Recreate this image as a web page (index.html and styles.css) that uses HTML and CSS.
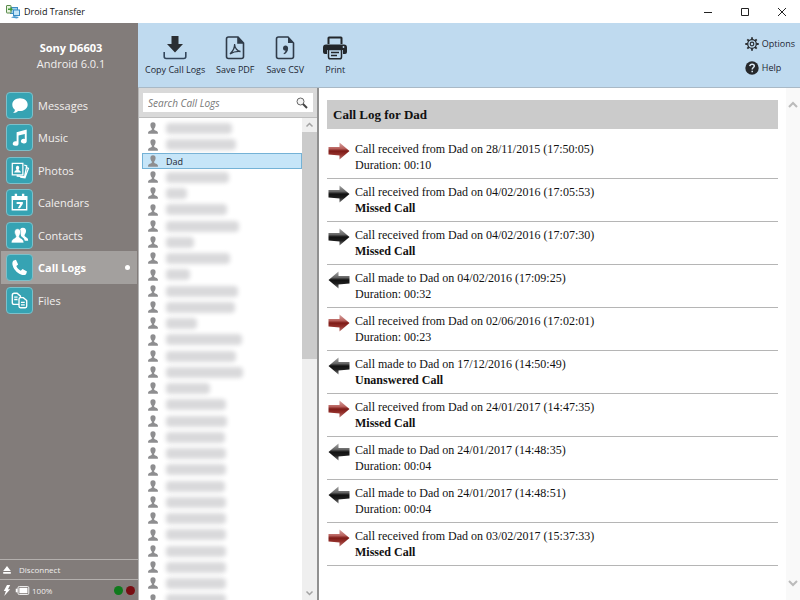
FILE: index.html
```html
<!DOCTYPE html>
<html lang="en">
<head>
    <meta charset="UTF-8">
    <meta name="viewport" content="width=device-width, initial-scale=1.0">
    <title>Droid Transfer</title>
    <link rel="stylesheet" href="styles.css">
</head>
<body>
    <!-- Shared icons -->
    <svg class="sprite" aria-hidden="true">
        <defs>
            <linearGradient id="red-fill" x1="0" y1="0" x2="0" y2="1">
                <stop offset="0" stop-color="#d9a5a3"/>
                <stop offset="0.35" stop-color="#b8615d"/>
                <stop offset="0.5" stop-color="#7d1a16"/>
                <stop offset="0.7" stop-color="#93302b"/>
                <stop offset="1" stop-color="#b9706c"/>
            </linearGradient>
            <linearGradient id="black-fill" x1="0" y1="0" x2="0" y2="1">
                <stop offset="0" stop-color="#a5a5a5"/>
                <stop offset="0.35" stop-color="#666"/>
                <stop offset="0.5" stop-color="#111"/>
                <stop offset="0.7" stop-color="#1c1c1c"/>
                <stop offset="1" stop-color="#777"/>
            </linearGradient>
        </defs>
        <symbol id="arrow-red" viewBox="0 0 22 18">
            <path d="M.5 5H11.500V.5L21.500 9 11.500 17.500V13.500L.5 12.500z" fill="url(#red-fill)"/>
        </symbol>
        <symbol id="arrow-black" viewBox="0 0 22 18">
            <path d="M.5 5H11.500V.5L21.500 9 11.500 17.500V13.500L.5 12.500z" fill="url(#black-fill)"/>
        </symbol>
        <symbol id="arrow-left" viewBox="0 0 22 18">
            <path d="M21.500 5H10.500V.5L.5 9 10.500 17.500V13.500L21.500 12.500z" fill="url(#black-fill)"/>
        </symbol>
        <symbol id="person" viewBox="0 0 10 12">
            <path d="M5 .3C3.200.3 2.300 1.500 2.400 3.200c.1 1.600.8 2.600 1.400 3.200v1.300C3.600 8.700.3 8.600.1 10.500V11.700H9.900V10.500C9.700 8.600 6.400 8.700 6.200 7.700V6.400c.6-.6 1.300-1.600 1.400-3.200C7.700 1.500 6.800.3 5 .3z" fill="#8e8e90"/>
        </symbol>
        <symbol id="chevron-up" viewBox="0 0 12 8">
            <path d="M2 6l4-4 4 4" fill="none" stroke="currentColor" stroke-width="2"/>
        </symbol>
        <symbol id="chevron-down" viewBox="0 0 12 8">
            <path d="M2 2l4 4 4-4" fill="none" stroke="currentColor" stroke-width="2"/>
        </symbol>
    </svg>

    <header class="title-bar">
        <svg class="app-icon" viewBox="0 0 14 14" aria-hidden="true">
            <rect x="4.500" y="2.500" width="7" height="6" fill="#9fd0ee" stroke="#3a8cc4"/>
            <rect x="7.500" y="5" width="6" height="5.500" fill="#c5e6f8" stroke="#3a8cc4"/>
            <path d="M5 12.500l3-1.500 5 1-2 1.500z" fill="#4c9bd0"/>
            <rect x=".5" y=".5" width="4.500" height="7.500" rx=".5" fill="#e7f3dd" stroke="#5a8a4c"/>
            <path d="M2 3.500h2.500V2.200l2.500 2-2.500 2V5H2z" fill="#3f9a35"/>
        </svg>
        <h1>Droid Transfer</h1>
        <div class="window-buttons">
            <button aria-label="Minimize"><svg viewBox="0 0 10 10"><path d="M1 5.500h8" stroke="#222" fill="none"/></svg></button>
            <button aria-label="Maximize"><svg viewBox="0 0 10 10"><path d="M1.500 1.500h7v7h-7z" stroke="#222" fill="none"/></svg></button>
            <button aria-label="Close"><svg viewBox="0 0 10 10"><path d="M1 1l8 8M9 1L1 9" stroke="#222" fill="none"/></svg></button>
        </div>
    </header>

    <div class="app">
        <aside class="sidebar">
            <div class="device">
                <h2>Sony D6603</h2>
                <p>Android 6.0.1</p>
            </div>

            <nav class="menu">
                <a href="#messages">
                    <svg class="tile" viewBox="0 0 26 26"><path d="M13.500 5.500c-4.600 0-8 2.900-8 6.600 0 2.200 1 4 2.700 5.200 0 1.300-.7 2.500-1.900 3.400 2.200.1 4-.6 5.200-2 5.500.7 10-2.500 10-6.600 0-3.700-3.400-6.600-8-6.600z"/></svg>
                    Messages
                </a>
                <a href="#music">
                    <svg class="tile" viewBox="0 0 26 26"><path d="M10 7.500l10.500-2.700v11.900a3 2.400 0 1 1-2-2.200V9.300L12 11v8.200a3 2.400 0 1 1-2-2.200z"/></svg>
                    Music
                </a>
                <a href="#photos">
                    <svg class="tile" viewBox="0 0 26 26"><path d="M5.500 5.500h11v12h-11zM18 7.500l2.500.8-2.200 11-8.300-.4M20.500 10l1.800.8-3.600 9.700-5-.6" fill="none" stroke="#fff" stroke-width="1.300"/><path d="M7.500 15c.2-2 1.700-2 2.600-2.600C8.800 11 9 8 11 8s2.200 3 .9 4.400c.9.6 2.400.6 2.600 2.600z"/></svg>
                    Photos
                </a>
                <a href="#calendars">
                    <svg class="tile" viewBox="0 0 26 26"><path d="M5.500 7h15v13.500h-15z" fill="none" stroke="#fff" stroke-width="1.400"/><path d="M5 6.500h16v4H5zM8 4h2.500v3H8zM15.500 4H18v3h-2.500zM10 12.500h6.500v1.700L13.500 19h-2.300l2.500-4.500H10z"/></svg>
                    Calendars
                </a>
                <a href="#contacts">
                    <svg class="tile" viewBox="0 0 26 26"><path d="M16.500 5c-2.600 0-3.300 2.200-3 4.300.2 1.500 1 2.400 1 3.700 0 1.500 3.500 2 4 5.500h3.500c.3-4-3.800-3.600-3.800-5.500 0-1 1.200-2 1.500-3.700C20.200 7 19.100 5 16.500 5z"/><path d="M11 6c-2.600 0-3.400 2.200-3.100 4.300.2 1.500 1.400 2.600 1.400 3.700 0 2-5 1.900-4.800 6.700h13c.2-4.800-4.800-4.700-4.800-6.700 0-1.100 1.200-2.200 1.400-3.700C14.400 8.200 13.600 6 11 6z" stroke="#36a3b3" stroke-width=".6"/></svg>
                    Contacts
                </a>
                <a href="#call-logs" class="active">
                    <svg class="tile" viewBox="0 0 26 26"><path d="M6.500 6l2.800-1 2.300 4.800-1.900 1.700c.8 2.200 2.400 3.900 4.600 4.800l1.900-1.700 4.600 2.600-1 2.700c-1 1-3.100 1.300-5.300.4C10 18.500 6.300 14 5.600 9.600c-.1-1.500.2-2.800.9-3.600z"/></svg>
                    Call Logs
                    <span class="dot"></span>
                </a>
                <a href="#files">
                    <svg class="tile" viewBox="0 0 26 26"><g stroke="#fff" stroke-width="1.400" fill="none"><path d="M5.500 7.500q0-2 2-2h3l3.500 3v6.500q0 2-2 2H7.500q-2 0-2-2zM7.500 9.500H11M7.500 12H11"/><path d="M12.500 11.500q0-1.500 1.500-1.500h3l3.500 3v6q0 1.500-1.500 1.500H14q-1.500 0-1.500-1.500z" fill="#36a3b3"/><path d="M14.500 15h4M14.500 17.500h4"/></g></svg>
                    Files
                </a>
            </nav>

            <div class="sidebar-footer">
                <button class="disconnect">
                    <svg viewBox="0 0 8 8"><path d="M4 0l3.800 5H.2zM.2 6h7.600v1.800H.2z"/></svg>
                    Disconnect
                </button>
                <div class="status">
                    <svg class="bolt" viewBox="0 0 8 12"><path d="M4 0L.5 6.500h2.300L1 12l6.500-7.500H5L7.500 0z"/></svg>
                    <svg class="battery" viewBox="0 0 15 10"><rect x="2.500" y=".5" width="12" height="9" rx="1.500" fill="none" stroke="#fff"/><rect x="4" y="2" width="9" height="6"/><rect x="0" y="3" width="2" height="4"/></svg>
                    <span>100%</span>
                    <span class="light green"></span>
                    <span class="light red"></span>
                </div>
            </div>
        </aside>

        <div class="content">
            <div class="toolbar">
                <button class="tool">
                    <svg viewBox="0 0 24 24"><path d="M8.500 0h7v8H20l-8 8.500L4 8h4.500z" fill="#2a2e33"/><path d="M1.200 16v4.500q0 2 2 2h17.600q2 0 2-2V16" fill="none" stroke="#33465c" stroke-width="1.600"/></svg>
                    Copy Call Logs
                </button>
                <button class="tool">
                    <svg viewBox="0 0 24 24"><path d="M5.500 1h9.500l5.500 6v13.500q0 2-2 2h-13q-2 0-2-2V3q0-2 2-2zM15 1v6h5.500" fill="none" stroke="#2f3b49" stroke-width="1.600"/><path d="M15 1v6h5.500z" fill="#2f3b49"/><path d="M7 18c2-2 5-6.500 4.500-10 .3 4 3 7.500 6 7.500-3-.3-7 .3-10.500 2.500z" fill="none" stroke="#2f3b49" stroke-width="1.300"/></svg>
                    Save PDF
                </button>
                <button class="tool">
                    <svg viewBox="0 0 24 24"><path d="M5.500 1h9.500l5.500 6v13.500q0 2-2 2h-13q-2 0-2-2V3q0-2 2-2z" fill="none" stroke="#2f3b49" stroke-width="1.600"/><path d="M15 1v6h5.500zM12.500 9.500c1.600 0 2.600 1.100 2.600 2.900 0 2.800-1.600 4.900-4.100 5.900l-.5-.9c1.300-.7 2-1.700 2-2.800-1.500.1-2.500-.9-2.500-2.300 0-1.600 1-2.800 2.500-2.800z" fill="#2f3b49"/></svg>
                    Save CSV
                </button>
                <button class="tool">
                    <svg viewBox="0 0 24 24"><path d="M4.500 8V2q0-1.500 1.500-1.500h12q1.500 0 1.500 1.500v6h-2V2.500h-11V8z" fill="#23272b"/><path d="M3 8.500h18q3 0 3 3V16q0 2-2 2h-2v-4H4v4H2q-2 0-2-2v-4.500q0-3 3-3z" fill="#23272b"/><path d="M5.500 13.500h13v7.500q0 1.800-1.800 1.800H7.300q-1.800 0-1.800-1.800z" fill="none" stroke="#23272b" stroke-width="1.500"/><path d="M8 16.500h8M8 19.500h6" stroke="#23272b" stroke-width="1.300"/><circle cx="20.500" cy="11" r=".9" fill="#bfdaef"/></svg>
                    Print
                </button>
                <div class="tool-links">
                    <button>
                        <svg viewBox="0 0 14 14"><g fill="none" stroke="#2c3034"><circle cx="7" cy="7" r="4.300" stroke-width="1.300"/><circle cx="7" cy="7" r="1.800" stroke-width="1.200"/><path d="M7 .3v2.400M7 11.300v2.400M.3 7h2.400M11.300 7h2.400M2.300 2.300L4 4M10 10l1.700 1.700M11.700 2.300L10 4M4 10l-1.700 1.700" stroke-width="1.800"/></g></svg>
                        Options
                    </button>
                    <button>
                        <svg viewBox="0 0 14 14"><circle cx="7" cy="7" r="6.700" fill="#26282b"/><path d="M4.800 5.200C5 3.700 6 3.200 7.100 3.200c1.300 0 2.200.7 2.200 1.800 0 1.500-2.100 1.600-2.100 3.500M7.200 9.700v1.600" fill="none" stroke="#dce9f4" stroke-width="1.500"/></svg>
                        Help
                    </button>
                </div>
            </div>

            <div class="panes">
                <section class="contacts">
                    <div class="search">
                        <input type="text" id="search" placeholder="Search Call Logs" aria-label="Search Call Logs">
                        <svg viewBox="0 0 12 12" aria-hidden="true"><circle cx="4.500" cy="4.500" r="3.500" fill="#f4f4f4" stroke="#666"/><path d="M7 7l4 4" stroke="#444" stroke-width="2"/></svg>
                    </div>
                    <div class="list-wrap">
                        <ul class="contact-list" id="contact-list"></ul>
                        <div class="scrollbar">
                            <svg><use href="#chevron-up"/></svg>
                            <div class="track"><div class="thumb"></div></div>
                            <svg><use href="#chevron-down"/></svg>
                        </div>
                    </div>
                </section>

                <main class="log">
                    <div class="log-body">
                        <h2>Call Log for Dad</h2>
                        <ul>
                            <li><svg><use href="#arrow-red"/></svg><p>Call received from Dad on 28/11/2015 (17:50:05)<br>Duration: 00:10</p></li>
                            <li><svg><use href="#arrow-black"/></svg><p>Call received from Dad on 04/02/2016 (17:05:53)<br><b>Missed Call</b></p></li>
                            <li><svg><use href="#arrow-black"/></svg><p>Call received from Dad on 04/02/2016 (17:07:30)<br><b>Missed Call</b></p></li>
                            <li><svg><use href="#arrow-left"/></svg><p>Call made to Dad on 04/02/2016 (17:09:25)<br>Duration: 00:32</p></li>
                            <li><svg><use href="#arrow-red"/></svg><p>Call received from Dad on 02/06/2016 (17:02:01)<br>Duration: 00:23</p></li>
                            <li><svg><use href="#arrow-left"/></svg><p>Call made to Dad on 17/12/2016 (14:50:49)<br><b>Unanswered Call</b></p></li>
                            <li><svg><use href="#arrow-red"/></svg><p>Call received from Dad on 24/01/2017 (14:47:35)<br><b>Missed Call</b></p></li>
                            <li><svg><use href="#arrow-left"/></svg><p>Call made to Dad on 24/01/2017 (14:48:35)<br>Duration: 00:04</p></li>
                            <li><svg><use href="#arrow-left"/></svg><p>Call made to Dad on 24/01/2017 (14:48:51)<br>Duration: 00:04</p></li>
                            <li><svg><use href="#arrow-red"/></svg><p>Call received from Dad on 03/02/2017 (15:37:33)<br><b>Missed Call</b></p></li>
                        </ul>
                    </div>
                    <div class="scrollbar light-bar">
                        <svg><use href="#chevron-up"/></svg>
                        <svg><use href="#chevron-down"/></svg>
                    </div>
                </main>
            </div>
        </div>
    </div>

    <script src="script.js"></script>
</body>
</html>
```

FILE: styles.css
```css
* {
    box-sizing: border-box;
}

body {
    display: flex;
    flex-direction: column;
    height: 100vh;
    margin: 0;
    overflow: hidden;
    font-family: "Open Sans", "Noto Sans", sans-serif;
    font-size: 10px;
    color: #1d2733;
    background: #fff;
}

h1, h2, p, ul {
    margin: 0;
    padding: 0;
}

ul {
    list-style: none;
}

svg {
    display: block;
    flex: none;
}

button {
    padding: 0;
    border: none;
    background: none;
    font: inherit;
    color: inherit;
    cursor: pointer;
}

.sprite {
    position: absolute;
    width: 0;
    height: 0;
}

/* Title bar */
.title-bar {
    display: flex;
    flex: none;
    align-items: center;
    height: 23px;
    padding-left: 6px;
}

.title-bar h1 {
    margin-left: 4px;
    font-size: 9px;
    font-weight: normal;
    color: #111;
}

.app-icon {
    width: 14px;
    height: 14px;
}

.window-buttons {
    display: flex;
    margin-left: auto;
}

.window-buttons button {
    display: flex;
    align-items: center;
    justify-content: center;
    width: 37px;
    height: 22px;
}

.window-buttons svg {
    width: 10px;
    height: 10px;
}

.app {
    display: flex;
    flex: 1;
    min-height: 0;
}

/* Sidebar */
.sidebar {
    display: flex;
    flex-direction: column;
    flex: none;
    width: 138px;
    color: #f1efee;
    background: #827c7a;
}

.sidebar svg {
    fill: #fff;
}

.device {
    padding: 17px 0 17px 4px;
    font-size: 11px;
    line-height: 16px;
    text-align: center;
}

.device h2 {
    font-size: 11px;
    color: #fff;
}

.menu {
    padding: 0 1px;
}

.menu a {
    display: flex;
    align-items: center;
    height: 32px;
    padding-left: 5px;
    font-size: 11px;
    color: inherit;
    text-decoration: none;
}

.menu a:nth-child(even) {
    height: 33px;
}

.menu .active {
    font-weight: bold;
    color: #fff;
    background: #a3a09e;
}

.tile {
    width: 27px;
    height: 27px;
    margin-right: 5px;
    border: 1px solid #7cc0ca;
    border-radius: 4px;
    background: #36a3b3;
}

.dot {
    width: 5px;
    height: 5px;
    margin-left: auto;
    margin-right: 7px;
    border-radius: 50%;
    background: #fff;
}

.sidebar-footer {
    margin-top: auto;
    font-size: 8px;
}

.disconnect,
.status {
    display: flex;
    align-items: center;
    width: 100%;
    height: 20px;
    padding: 0 3px;
    border-top: 1px solid #b3afad;
}

.disconnect svg {
    width: 8px;
    height: 8px;
    margin-right: 8px;
}

.status {
    height: 21px;
    gap: 2px;
}

.bolt {
    width: 8px;
    height: 11px;
}

.battery {
    width: 15px;
    height: 9px;
    margin-left: 2px;
}

.light {
    width: 9px;
    height: 9px;
    border-radius: 50%;
}

.light.green {
    margin-left: auto;
    background: #0f7a1c;
}

.light.red {
    margin-left: 1px;
    background: #780d12;
}

/* Toolbar */
.content {
    display: flex;
    flex: 1;
    flex-direction: column;
    min-width: 0;
}

.toolbar {
    display: flex;
    flex: none;
    align-items: flex-start;
    height: 65px;
    padding: 13px 5px 0 7px;
    border-bottom: 1px solid #a9b9c6;
    background: #bfdaef;
}

.tool {
    display: flex;
    flex-direction: column;
    align-items: center;
    gap: 2px;
    min-width: 40px;
    margin-right: 10px;
    font-size: 9px;
    line-height: 16px;
    white-space: nowrap;
}

.tool svg {
    width: 24px;
    height: 24px;
}

.tool-links {
    display: flex;
    flex-direction: column;
    gap: 8px;
    margin-left: auto;
}

.tool-links button {
    display: flex;
    align-items: center;
    gap: 3px;
    font-size: 9px;
    line-height: 16px;
}

.tool-links svg {
    width: 14px;
    height: 14px;
}

.panes {
    display: flex;
    flex: 1;
    min-height: 0;
}

/* Contact list */
.contacts {
    display: flex;
    flex: none;
    flex-direction: column;
    width: 181px;
    border-left: 1px solid #b5b5b5;
    border-right: 2px solid #909090;
}

.search {
    position: relative;
    flex: none;
    height: 30px;
    padding: 5px 4px;
    border-bottom: 1px solid #bdbdbd;
    background: #d9d9d9;
}

.search input {
    display: block;
    width: 100%;
    height: 19px;
    padding: 0 22px 0 5px;
    border: none;
    border-radius: 0;
    font: italic 10px "Open Sans", "Noto Sans", sans-serif;
    background: #fff;
}

.search input::placeholder {
    color: #777;
    opacity: 1;
}

.search svg {
    position: absolute;
    top: 9px;
    right: 9px;
    width: 12px;
    height: 12px;
}

.list-wrap {
    display: flex;
    flex: 1;
    min-height: 0;
}

.contact-list {
    flex: 1;
    padding: 2px 0 0 3px;
    overflow: hidden;
}

.contact-list li {
    height: 16px;
}

.contact-list li:nth-child(4n + 2) {
    height: 17px;
}

.contact-list button {
    display: flex;
    align-items: center;
    width: 100%;
    height: 100%;
    padding: 0 5px;
    border: 1px solid transparent;
    font-size: 9px;
}

.contact-list .selected button {
    border-color: #74b2d6;
    background: #c6e5f8;
}

.contact-list svg {
    width: 10px;
    height: 12px;
    margin-right: 8px;
}

.hidden-name {
    height: 11px;
    border-radius: 4px;
    background: #d9d9db;
    filter: blur(2px);
}

.scrollbar {
    display: flex;
    flex: none;
    flex-direction: column;
    align-items: center;
    justify-content: space-between;
    width: 15px;
    padding: 3px 0;
    color: #a3a3a3;
    background: #efefef;
}

.scrollbar svg {
    width: 9px;
    height: 8px;
}

.track {
    flex: 1;
    width: 100%;
    padding: 3px 0;
}

.thumb {
    height: 50%;
    background: #cbcbcb;
}

/* Call log */
.log {
    display: flex;
    flex: 1;
    min-width: 0;
    font-family: "Liberation Serif", serif;
    font-size: 12px;
    line-height: 16px;
    color: #111;
}

.log-body {
    flex: 1;
    padding: 12px 8px 0;
}

.log h2 {
    padding: 7px 6px;
    margin-bottom: 7px;
    font-size: 13px;
    line-height: 15px;
    background: #cbcbcb;
}

.log li {
    display: flex;
    height: 43px;
    padding-top: 5px;
    border-bottom: 1px solid #b5b5b5;
}

.log li svg {
    width: 22px;
    height: 18px;
    margin: 1px 5px 0 1px;
}

.light-bar {
    width: 14px;
    padding: 13px 0;
    color: #bbb;
    background: #f9f9f9;
}

.light-bar svg {
    width: 12px;
    height: 8px;
}
```

FILE: script.js
```js
// Width of each hidden contact name, null is the open contact
const contacts = [
    66, 70, null, 63, 21, 61, 73, 28, 64, 24,
    72, 69, 31, 76, 70, 77, 44, 60, 61, 59,
    60, 60, 59, 60, 60, 60, 60, 60, 60, 60
];

const list = document.getElementById("contact-list");

contacts.forEach(width => {
    const item = document.createElement("li");
    const icon = '<svg><use href="#person"/></svg>';

    if (width === null) {
        item.className = "selected";
        item.innerHTML = `<button>${icon}Dad</button>`;
    } else {
        item.innerHTML = `<button aria-label="Contact">${icon}<span class="hidden-name" style="width: ${width}px"></span></button>`;
    }
    list.appendChild(item);
});
```
